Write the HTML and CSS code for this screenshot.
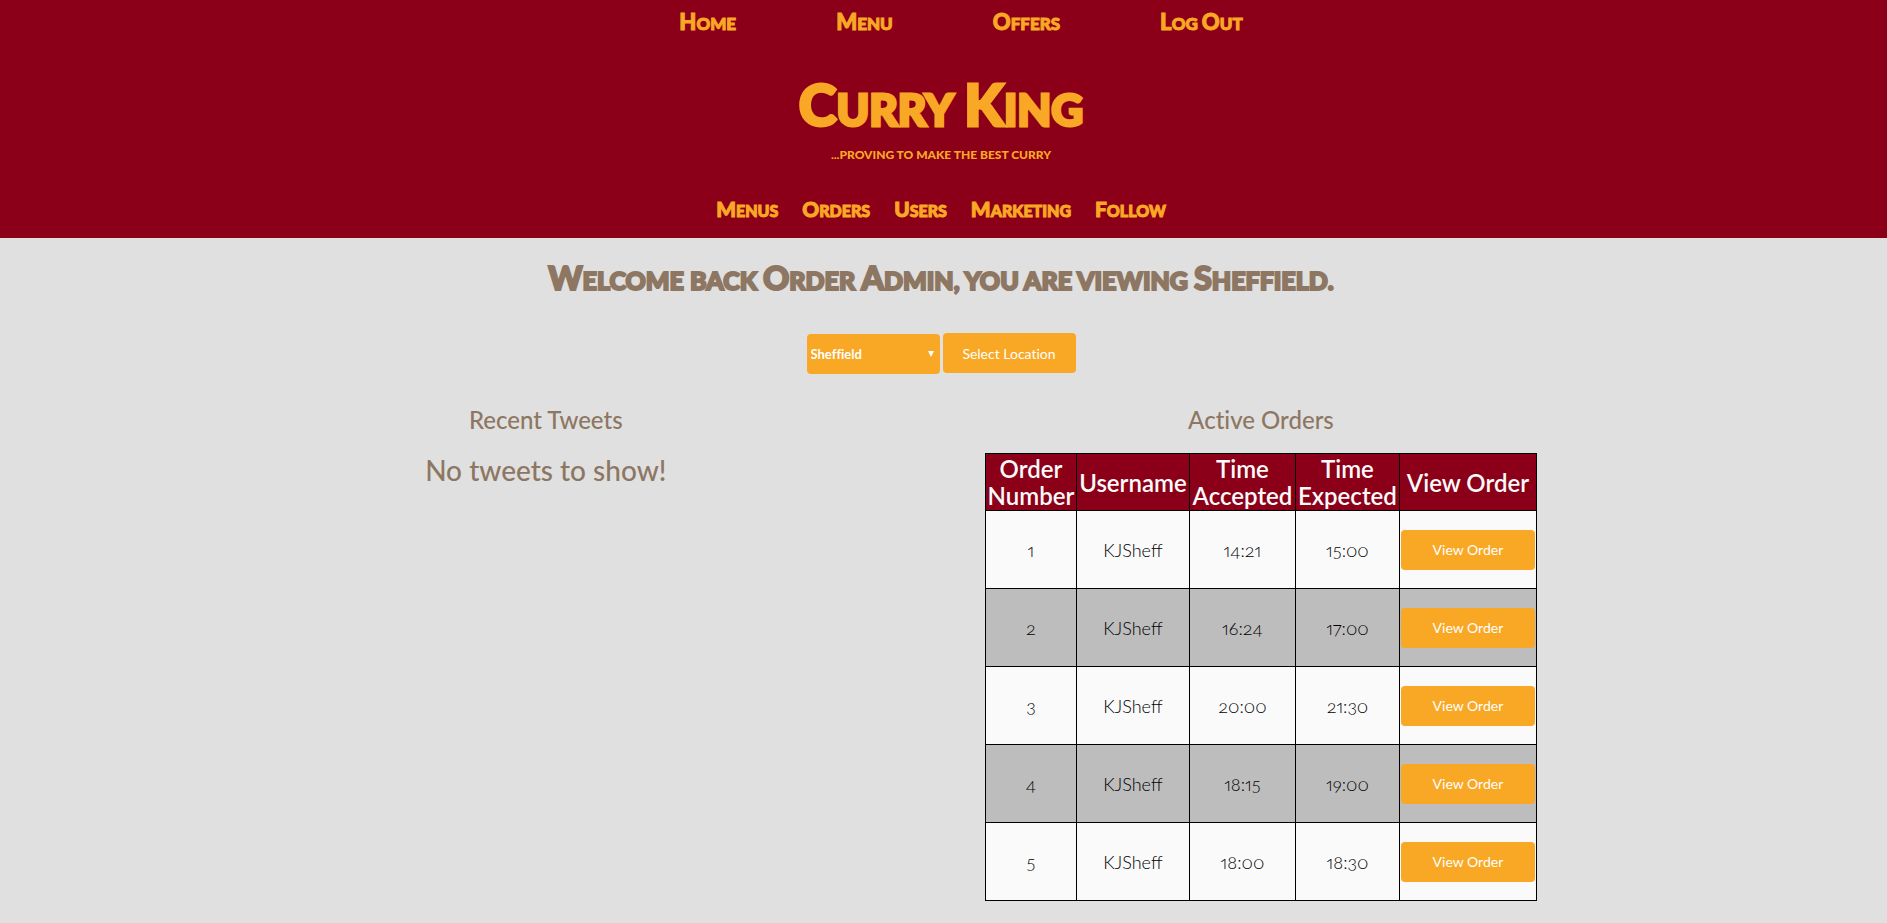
FILE: index.html
```html
<!DOCTYPE html>
<html lang="en">
<head>
<meta charset="utf-8">
<title>Curry King</title>
<link rel="stylesheet" href="styles.css">
</head>
<body>
<header class="site-header">
  <nav class="main-nav" aria-label="Main">
    <a class="caps" href="#"><span>Home</span></a>
    <a class="caps" href="#"><span>Menu</span></a>
    <a class="caps" href="#"><span>Offers</span></a>
    <a class="caps" href="#"><span>Log</span> <span>Out</span></a>
  </nav>
  <h1 class="brand caps"><span>Curry</span> <span>King</span></h1>
  <p class="tagline">...proving to make the best curry</p>
  <nav class="admin-nav" aria-label="Admin">
    <a class="caps" href="#"><span>Menus</span></a>
    <a class="caps" href="#"><span>Orders</span></a>
    <a class="caps" href="#"><span>Users</span></a>
    <a class="caps" href="#"><span>Marketing</span></a>
    <a class="caps" href="#"><span>Follow</span></a>
  </nav>
</header>
<main>
  <h2 class="welcome caps"><span>Welcome</span> back <span>Order</span> <span>Admin</span>, you are viewing <span>Sheffield</span>.</h2>
  <form class="location">
    <span class="select-wrap">
      <select class="control" aria-label="Location"><option>Sheffield</option></select>
      <svg class="arrow" viewBox="0 0 6 6" aria-hidden="true"><path d="M0 0h6L3 6z" fill="#fff"/></svg>
    </span>
    <button class="control" type="button">Select Location</button>
  </form>
  <div class="columns">
    <section>
      <h3 class="section-title">Recent Tweets</h3>
      <p class="empty">No tweets to show!</p>
    </section>
    <section>
      <h3 class="section-title">Active Orders</h3>
      <table class="orders">
        <thead>
          <tr><th class="c-number">Order Number</th><th class="c-user">Username</th><th class="c-accepted">Time Accepted</th><th class="c-expected">Time Expected</th><th class="c-view">View Order</th></tr>
        </thead>
        <tbody>
          <tr><td>1</td><td>KJSheff</td><td>14:21</td><td>15:00</td><td><button class="control" type="button">View Order</button></td></tr>
          <tr><td>2</td><td>KJSheff</td><td>16:24</td><td>17:00</td><td><button class="control" type="button">View Order</button></td></tr>
          <tr><td>3</td><td>KJSheff</td><td>20:00</td><td>21:30</td><td><button class="control" type="button">View Order</button></td></tr>
          <tr><td>4</td><td>KJSheff</td><td>18:15</td><td>19:00</td><td><button class="control" type="button">View Order</button></td></tr>
          <tr><td>5</td><td>KJSheff</td><td>18:00</td><td>18:30</td><td><button class="control" type="button">View Order</button></td></tr>
        </tbody>
      </table>
    </section>
  </div>
</main>
</body>
</html>
```
FILE: styles.css
```css
* { box-sizing: border-box; }

body {
  margin: 0;
  background: #e0e0e0;
  color: #000;
  font-family: Lato, "Open Sans", sans-serif;
}

h1, h2, h3, p { margin: 0; }

.site-header {
  background: #8b0018;
  color: #f9a825;
  display: flex;
  flex-direction: column;
  align-items: center;
  padding: 8px 5px 13px 0;
}

/* Large initial on each word, the rest as smaller capitals */
.caps, .tagline {
  font-family: "Lato Black", Lato, "Open Sans", sans-serif;
  text-transform: uppercase;
  font-weight: 900;
}
.caps { -webkit-text-stroke: 1px currentColor; }
.caps span { display: inline-block; }
.caps span::first-letter { font-size: 130%; }

.main-nav, .admin-nav { display: flex; }
.main-nav { gap: 100px; padding-left: 40px; }
.admin-nav { gap: 24px; margin-top: 30px; }
.main-nav a, .admin-nav a {
  color: inherit;
  text-decoration: none;
  font-size: 17px;
  line-height: 28px;
}
.admin-nav a { font-size: 16px; }

.brand {
  font-size: 44px;
  line-height: 64px;
  margin-top: 34px;
  -webkit-text-stroke-width: 3px;
}
.tagline {
  font-size: 12px;
  line-height: 20px;
  margin-top: 4px;
}

main { padding-right: 5px; }

.welcome {
  color: #8d7763;
  font-size: 25px;
  line-height: 40px;
  text-align: center;
  padding-top: 20px;
  -webkit-text-stroke-width: 2px;
}

.location {
  display: flex;
  justify-content: center;
  gap: 3px;
  padding-top: 33px;
}
.select-wrap {
  position: relative;
  padding-top: 1px;
}
.control {
  width: 133px;
  height: 40px;
  border: 0;
  border-radius: 4px;
  background: #f9a825;
  color: #fff;
  font-family: Lato, "Open Sans", sans-serif;
  font-size: 14px;
  font-variant-ligatures: no-common-ligatures;
}
select.control {
  appearance: none;
  padding: 0 4px;
  font-size: 13px;
  font-weight: 700;
}
.arrow {
  position: absolute;
  right: 6px;
  top: 18px;
  width: 6px;
  height: 6px;
}

.columns {
  display: grid;
  grid-template-columns: 1fr 1fr;
  padding: 0 14% 0 10%;
  margin-top: 30px;
  text-align: center;
}
.section-title, .empty {
  color: #8d7763;
  font-family: "Lato Medium", Lato, "Open Sans", sans-serif;
  font-weight: 500;
  font-variant-ligatures: no-common-ligatures;
}
.section-title {
  font-size: 24px;
  line-height: 32px;
}
.empty {
  font-size: 28px;
  line-height: 36px;
  margin-top: 16px;
}

.orders {
  width: 552px;
  margin: 17px auto 22px;
  table-layout: fixed;
  border-collapse: collapse;
}
.orders th, .orders td {
  border: 1px solid #000;
  padding: 0 1px;
}
.orders th {
  height: 57px;
  background: #8b0018;
  color: #fafafa;
  font-size: 24px;
  line-height: 27px;
  font-weight: 600;
}
.orders td {
  height: 78px;
  background: #fafafa;
  font-size: 18px;
  font-weight: 300;
  font-variant-numeric: oldstyle-nums proportional-nums;
}
.orders tr:nth-child(even) td { background: #bdbdbd; }
.orders .control { width: 100%; display: block; }
.c-number { width: 91px; }
.c-user { width: 113px; }
.c-accepted { width: 106px; }
.c-expected { width: 104px; }
```
